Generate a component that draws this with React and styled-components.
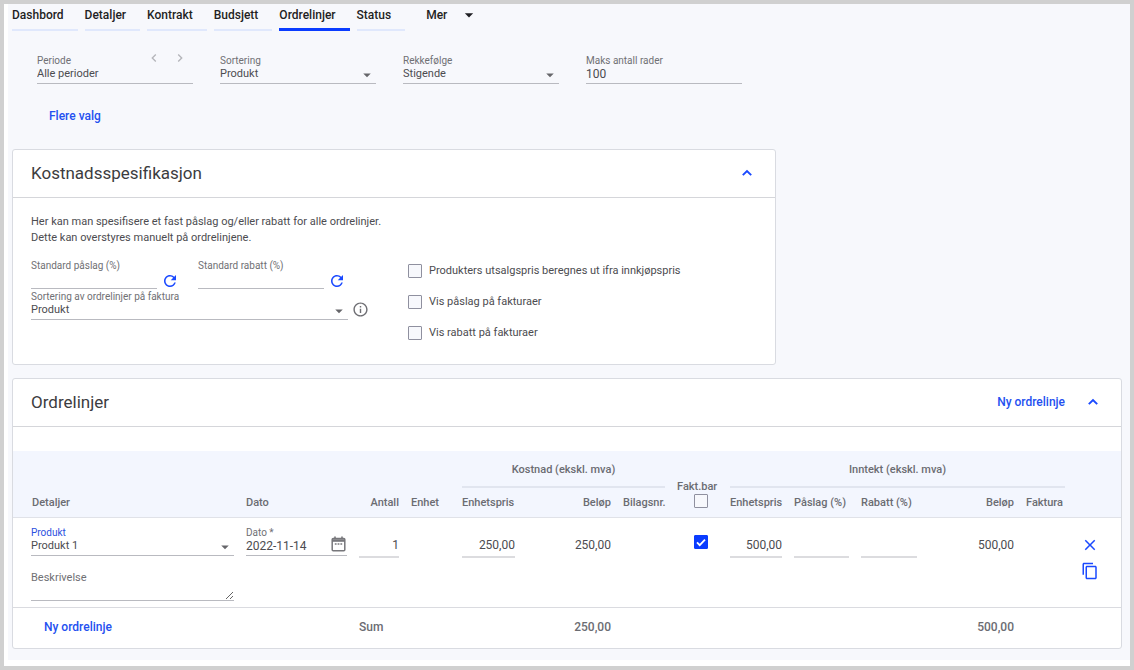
import React from 'react';
import styled, { createGlobalStyle } from 'styled-components';
import {
    MdArrowDropDown,
    MdChevronLeft,
    MdChevronRight,
    MdClose,
    MdContentCopy,
    MdInfoOutline,
    MdRefresh,
} from 'react-icons/md';

const GlobalStyle = createGlobalStyle`
    * {
        box-sizing: border-box;
    }

    body {
        margin: 0;
        background: #fff;
        color: #4c4c50;
        font-family: Roboto, 'Liberation Sans', sans-serif;
        font-size: 11px;
        line-height: 16px;
    }

    button, input, select, textarea {
        font: inherit;
        color: inherit;
    }
`

const Frame = styled.div`
    min-height: 100vh;
    padding: 0 0 6px 4px;
    border: 4px solid #d0d0d0;
    background: #fff;
`

const Page = styled.main`
    padding: 0 8px 11px 4px;
    background: #f7f8fc;
`

const Tabs = styled.nav`
    display: flex;
    align-items: flex-start;
    gap: 7px;
`

const Tab = styled.a`
    height: 27px;
    padding-right: 14px;
    border-bottom: ${props => props.$active ? '3px solid #0a3cff' : '2px solid #e0e8fc'};
    color: #1f1f23;
    font-size: 12px;
    font-weight: 500;
    line-height: 22px;
    text-decoration: none;
`

const MoreButton = styled.button`
    display: flex;
    align-items: center;
    gap: 12px;
    height: 22px;
    margin-left: 14px;
    padding: 0;
    border: 0;
    background: none;
    color: #1f1f23;
    font-size: 12px;
    font-weight: 500;
    cursor: pointer;
`

const Filters = styled.div`
    display: flex;
    flex-wrap: wrap;
    gap: 27px;
    margin: 24px 0 0 25px;
`

const FieldBox = styled.div`
    display: flex;
    flex-direction: column;
    flex: ${props => props.$width ? 'none' : '1'};
    width: ${props => props.$width ? props.$width + 'px' : 'auto'};
    min-width: 0;
    border-bottom: 1px solid #b9bac0;
`

const FieldTop = styled.div`
    display: flex;
    justify-content: space-between;
    height: 12px;
`

const FieldLabel = styled.label`
    color: ${props => props.$blue ? '#2b50e0' : '#707074'};
    font-size: 10px;
    line-height: 12px;
    white-space: nowrap;
`

const Stack = styled.div`
    display: grid;
    grid-template-rows: 16px;
    align-items: center;

    > * {
        grid-area: 1 / 1;
    }

    > svg {
        justify-self: end;
        color: #66666a;
        pointer-events: none;
    }
`

const Input = styled.input`
    width: 100%;
    min-width: 0;
    height: 16px;
    padding: 0 0 2px;
    border: 0;
    outline: 0;
    background: none;
    font-size: ${props => props.$digits ? '12px' : 'inherit'};
`

const SelectInput = styled.select`
    width: 100%;
    height: 16px;
    padding: 0 18px 2px 0;
    border: 0;
    outline: 0;
    appearance: none;
    background: none;
    line-height: 14px;
`

const Steps = styled.div`
    display: flex;
    gap: 10px;
    height: 12px;
    margin-right: 5px;
`

const IconButton = styled.button`
    display: flex;
    align-items: center;
    justify-content: center;
    flex: none;
    width: ${props => props.$width || 24}px;
    height: ${props => props.$height || 16}px;
    padding: 0;
    border: 0;
    background: none;
    color: ${props => props.$color || '#1a49ff'};
    cursor: pointer;
`

const TextButton = styled.button`
    padding: 0;
    border: 0;
    background: none;
    color: #2450f0;
    font-size: 12px;
    font-weight: 500;
    cursor: pointer;
`

const MoreChoices = styled.div`
    margin: 24px 0 24px 37px;
`

const Card = styled.section`
    max-width: ${props => props.$narrow ? '764px' : 'none'};
    margin-bottom: ${props => props.$narrow ? '13px' : '0'};
    border: 1px solid #d9dbe1;
    border-radius: 3px;
    background: #fff;
`

const CardHeader = styled.header`
    display: flex;
    align-items: center;
    height: 48px;
    padding: 0 0 2px 18px;
    border-bottom: 1px solid #d5d6da;
`

const CardTitle = styled.h2`
    flex: 1;
    margin: 0;
    color: #3c3c40;
    font-size: 17px;
    font-weight: 400;
`

const SpecBody = styled.div`
    padding: 16px 18px 23px;
`

const SpecText = styled.p`
    margin: 0 0 14px;
`

const SpecGrid = styled.div`
    display: grid;
    grid-template-columns: 377px 1fr;
`

const SpecFields = styled.div`
    display: flex;
    flex-direction: column;
    gap: 2px;
`

const SpecRow = styled.div`
    display: flex;
    align-items: flex-end;
`

const SpecPair = styled.div`
    display: flex;
    align-items: flex-end;
    margin-right: 15px;
`

const Checks = styled.div`
    display: flex;
    flex-direction: column;
    gap: 15px;
    padding-top: 3px;
`

const CheckLabel = styled.label`
    display: flex;
    align-items: center;
    gap: 7px;
`

const CheckStack = styled.span`
    display: inline-grid;
    place-items: center;
    vertical-align: top;

    > * {
        grid-area: 1 / 1;
    }

    > svg {
        color: #fff;
        pointer-events: none;
    }
`

const Check = styled.input`
    width: 14px;
    height: 14px;
    margin: 0;
    border: 1px solid #8f909f;
    border-radius: 1px;
    appearance: none;
    background: #f7f8fc;

    &:checked {
        border-color: #0a3cff;
        background: #0a3cff;
    }
`

const Table = styled.table`
    width: 100%;
    margin-top: 24px;
    border-collapse: separate;
    border-spacing: 0;
    table-layout: fixed;
`

const Col = styled.col`
    width: ${props => props.$width ? props.$width + 'px' : 'auto'};
`

const Head = styled.thead`
    background: #f3f6fe;
    color: #6b6c72;
`

const HeadCell = styled.th`
    height: ${props => props.$low ? '30px' : '37px'};
    padding: ${props => props.$flush ? '0 0 0 6px' : '0 6px'};
    border-bottom: ${props => props.$low ? '1px solid #e0e2e8' : '0'};
    font-weight: 500;
    line-height: ${props => props.$low ? '14px' : '16px'};
    text-align: ${props => props.$align || 'left'};
    vertical-align: ${props => props.$bottom ? 'bottom' : 'middle'};
    white-space: nowrap;

    &:first-child {
        padding-left: 19px;
    }
`

const GroupTitle = styled.div`
    height: 37px;
    padding-top: 11px;
    border-bottom: 2px solid #e1e5ef;
`

const HeadCheck = styled.div`
    display: grid;
    justify-items: center;
    padding-bottom: 9px;
`

const HeadCheckLabel = styled.label`
    justify-self: start;
`

const Cell = styled.td`
    padding: ${props => props.$flush ? '9px 0 6px 6px' : '9px 6px 6px'};
    text-align: ${props => props.$align || 'left'};
    vertical-align: top;

    &:first-child {
        padding-left: 18px;
    }
`

const NumberInput = styled(Input)`
    height: 20px;
    margin-top: 11px;
    padding: 0 0 4px;
    border-bottom: 2px solid #dcdcdf;
    font-size: 12px;
    text-align: right;
`

const Amount = styled.div`
    margin-top: 10px;
    font-size: 12px;
`

const CheckPlace = styled.div`
    margin-top: 8px;
`

const Description = styled.div`
    display: flex;
    flex-direction: column;
    margin-top: 14px;
`

const DescriptionLabel = styled.label`
    color: #707074;
`

const TextArea = styled.textarea`
    display: block;
    width: 100%;
    height: 15px;
    padding: 0;
    border: 0;
    border-bottom: 1px solid #b9bac0;
    outline: 0;
    background: none;
    resize: vertical;
`

const Actions = styled.div`
    display: flex;
    flex-direction: column;
    align-items: center;
    gap: 2px;
    padding: 6px 12px 0 0;
`

const SumCell = styled.td`
    height: 41px;
    padding: 0 6px 2px;
    border-top: 1px solid #dadbe0;
    color: #6b6c72;
    font-size: 12px;
    font-weight: 500;
    text-align: ${props => props.$align || 'left'};
    vertical-align: middle;

    &:first-child {
        padding-left: 31px;
    }
`

const tabs = ['Dashbord', 'Detaljer', 'Kontrakt', 'Budsjett', 'Ordrelinjer', 'Status'];

const columns = [null, 113, 52, 51, 65, 96, 54, 53, 64, 67, 68, 97, 51, 50];

function CalendarIcon(){
    return(
        <svg width="15" height="16" viewBox="0 0 15 16" fill="none" stroke="#77777b">
            <rect x="1.2" y="2.5" width="12.6" height="12.3" rx="1" strokeWidth="1.5" />
            <path d="M1 4.5h13" strokeWidth="2.6" />
            <path d="M4 0.5v2.5M11 0.5v2.5" strokeWidth="1.6" />
            <path d="M3.8 8h1.8M6.6 8h1.8M9.4 8h1.8" strokeWidth="1.3" />
        </svg>
    )
}

function CollapseIcon(){
    return(
        <svg width="12" height="12" viewBox="0 0 12 12" fill="none" stroke="currentColor">
            <path d="M1.8 8.2L6 4l4.2 4.2" strokeWidth="1.9" />
        </svg>
    )
}

function TickIcon(){
    return(
        <svg width="14" height="14" viewBox="0 0 14 14" fill="none" stroke="currentColor">
            <path d="M3 7.4l2.7 2.7L11 4.6" strokeWidth="1.8" />
        </svg>
    )
}

function Select({ id, value }){
    return(
        <Stack>
            <SelectInput id={id} defaultValue={value}>
                <option>{value}</option>
            </SelectInput>
            <MdArrowDropDown size={18} />
        </Stack>
    )
}

function Field({ id, label, value, select, width, blue, digits, extra }){
    return(
        <FieldBox $width={width}>
            <FieldTop>
                <FieldLabel htmlFor={id} $blue={blue}>{label}</FieldLabel>
                {extra}
            </FieldTop>
            {select
                ? <Select id={id} value={value} />
                : <Input id={id} defaultValue={value} $digits={digits} />}
        </FieldBox>
    )
}

function CheckBox({ id, checked, name }){
    return(
        <CheckStack>
            <Check id={id} type="checkbox" defaultChecked={checked} aria-label={name} />
            {checked && <TickIcon />}
        </CheckStack>
    )
}

function PeriodSteps(){
    return(
        <Steps>
            <IconButton type="button" aria-label="Forrige periode" $width={16} $height={6} $color="#b4b5ba">
                <MdChevronLeft size={18} />
            </IconButton>
            <IconButton type="button" aria-label="Neste periode" $width={16} $height={6} $color="#b4b5ba">
                <MdChevronRight size={18} />
            </IconButton>
        </Steps>
    )
}

function CostCard(){
    return(
        <Card $narrow>
            <CardHeader>
                <CardTitle>Kostnadsspesifikasjon</CardTitle>
                <IconButton type="button" aria-label="Skjul kostnadsspesifikasjon" $width={56}>
                    <CollapseIcon />
                </IconButton>
            </CardHeader>
            <SpecBody>
                <SpecText>
                    Her kan man spesifisere et fast påslag og/eller rabatt for alle ordrelinjer.<br />
                    Dette kan overstyres manuelt på ordrelinjene.
                </SpecText>
                <SpecGrid>
                    <SpecFields>
                        <SpecRow>
                            <SpecPair>
                                <Field id="markup" label="Standard påslag (%)" width={126} />
                                <IconButton type="button" aria-label="Oppdater påslag" $width={26}>
                                    <MdRefresh size={18} />
                                </IconButton>
                            </SpecPair>
                            <SpecPair>
                                <Field id="discount" label="Standard rabatt (%)" width={126} />
                                <IconButton type="button" aria-label="Oppdater rabatt" $width={26}>
                                    <MdRefresh size={18} />
                                </IconButton>
                            </SpecPair>
                        </SpecRow>
                        <SpecRow>
                            <Field id="lineSort" label="Sortering av ordrelinjer på faktura" value="Produkt" width={317} select />
                            <IconButton type="button" aria-label="Informasjon" $height={22} $color="#6e6e73">
                                <MdInfoOutline size={17} />
                            </IconButton>
                        </SpecRow>
                    </SpecFields>
                    <Checks>
                        <CheckLabel><CheckBox /> Produkters utsalgspris beregnes ut ifra innkjøpspris</CheckLabel>
                        <CheckLabel><CheckBox /> Vis påslag på fakturaer</CheckLabel>
                        <CheckLabel><CheckBox /> Vis rabatt på fakturaer</CheckLabel>
                    </Checks>
                </SpecGrid>
            </SpecBody>
        </Card>
    )
}

function OrderTable(){
    return(
        <Table>
            <colgroup>
                {columns.map((width, i) => <Col key={i} $width={width} />)}
            </colgroup>
            <Head>
                <tr>
                    <HeadCell colSpan={4} />
                    <HeadCell colSpan={3} $align="center"><GroupTitle>Kostnad (ekskl. mva)</GroupTitle></HeadCell>
                    <HeadCell rowSpan={2} $low $bottom $flush>
                        <HeadCheck>
                            <HeadCheckLabel htmlFor="billable">Fakt.bar</HeadCheckLabel>
                            <CheckBox id="billable" />
                        </HeadCheck>
                    </HeadCell>
                    <HeadCell colSpan={5} $align="center"><GroupTitle>Inntekt (ekskl. mva)</GroupTitle></HeadCell>
                    <HeadCell />
                </tr>
                <tr>
                    <HeadCell $low>Detaljer</HeadCell>
                    <HeadCell $low>Dato</HeadCell>
                    <HeadCell $low $align="right">Antall</HeadCell>
                    <HeadCell $low>Enhet</HeadCell>
                    <HeadCell $low>Enhetspris</HeadCell>
                    <HeadCell $low $align="right">Beløp</HeadCell>
                    <HeadCell $low>Bilagsnr.</HeadCell>
                    <HeadCell $low>Enhetspris</HeadCell>
                    <HeadCell $low>Påslag (%)</HeadCell>
                    <HeadCell $low>Rabatt (%)</HeadCell>
                    <HeadCell $low $align="right">Beløp</HeadCell>
                    <HeadCell $low>Faktura</HeadCell>
                    <HeadCell $low />
                </tr>
            </Head>
            <tbody>
                <tr>
                    <Cell>
                        <Field id="product" label="Produkt" value="Produkt 1" select blue />
                        <Description>
                            <DescriptionLabel htmlFor="description">Beskrivelse</DescriptionLabel>
                            <TextArea id="description" />
                        </Description>
                    </Cell>
                    <Cell>
                        <Field
                            id="date"
                            label="Dato *"
                            value="2022-11-14"
                            digits
                            extra={
                                <IconButton type="button" aria-label="Velg dato" $width={16} $height={34}>
                                    <CalendarIcon />
                                </IconButton>
                            }
                        />
                    </Cell>
                    <Cell><NumberInput aria-label="Antall" defaultValue="1" /></Cell>
                    <Cell />
                    <Cell><NumberInput aria-label="Enhetspris kostnad" defaultValue="250,00" /></Cell>
                    <Cell $align="right"><Amount>250,00</Amount></Cell>
                    <Cell />
                    <Cell $align="center" $flush><CheckPlace><CheckBox checked name="Fakturerbar" /></CheckPlace></Cell>
                    <Cell><NumberInput aria-label="Enhetspris inntekt" defaultValue="500,00" /></Cell>
                    <Cell><NumberInput aria-label="Påslag" /></Cell>
                    <Cell><NumberInput aria-label="Rabatt" /></Cell>
                    <Cell $align="right"><Amount>500,00</Amount></Cell>
                    <Cell />
                    <Cell>
                        <Actions>
                            <IconButton type="button" aria-label="Slett" $height={24}><MdClose size={18} /></IconButton>
                            <IconButton type="button" aria-label="Kopier" $height={24}><MdContentCopy size={18} /></IconButton>
                        </Actions>
                    </Cell>
                </tr>
            </tbody>
            <tfoot>
                <tr>
                    <SumCell colSpan={2}><TextButton type="button">Ny ordrelinje</TextButton></SumCell>
                    <SumCell colSpan={2}>Sum</SumCell>
                    <SumCell colSpan={2} $align="right">250,00</SumCell>
                    <SumCell colSpan={6} $align="right">500,00</SumCell>
                    <SumCell colSpan={2} />
                </tr>
            </tfoot>
        </Table>
    )
}

function App(){
    return(
        <Frame>
            <GlobalStyle />
            <Page>
                <Tabs>
                    {tabs.map(tab => (
                        <Tab key={tab} href="#" $active={tab === 'Ordrelinjer'}>{tab}</Tab>
                    ))}
                    <MoreButton type="button">Mer <MdArrowDropDown size={20} /></MoreButton>
                </Tabs>
                <Filters>
                    <Field id="period" label="Periode" value="Alle perioder" width={156} extra={<PeriodSteps />} />
                    <Field id="sort" label="Sortering" value="Produkt" width={156} select />
                    <Field id="order" label="Rekkefølge" value="Stigende" width={156} select />
                    <Field id="maxRows" label="Maks antall rader" value="100" width={156} digits />
                </Filters>
                <MoreChoices>
                    <TextButton type="button">Flere valg</TextButton>
                </MoreChoices>
                <CostCard />
                <Card>
                    <CardHeader>
                        <CardTitle>Ordrelinjer</CardTitle>
                        <TextButton type="button">Ny ordrelinje</TextButton>
                        <IconButton type="button" aria-label="Skjul ordrelinjer" $width={56}>
                            <CollapseIcon />
                        </IconButton>
                    </CardHeader>
                    <OrderTable />
                </Card>
            </Page>
        </Frame>
    )
}

export default App
